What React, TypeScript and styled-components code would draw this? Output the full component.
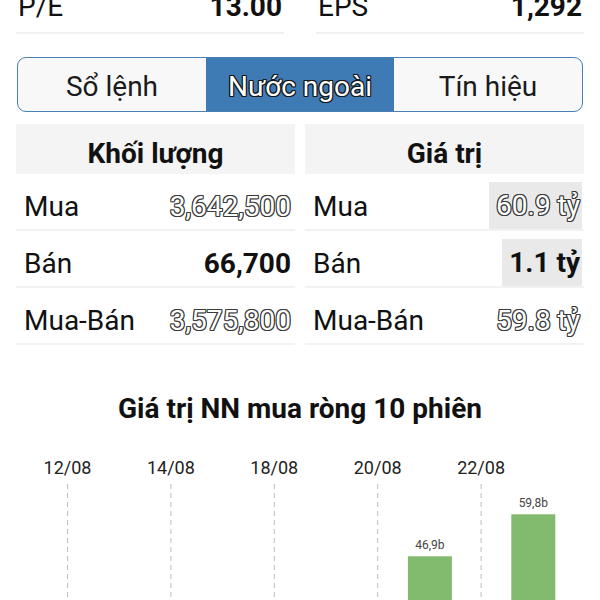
import React from "react";
import styled, { createGlobalStyle } from "styled-components";

const GlobalStyle = createGlobalStyle`
  html, body {
    margin: 0;
    padding: 0;
    background: #ffffff;
    font-family: Roboto, "Liberation Sans", Arial, sans-serif;
    color: #111;
    overflow: hidden;
  }
`;

const outline = (c: string) => `
  color: #ffffff;
  text-shadow: -1px 0 ${c}, 1px 0 ${c}, 0 -1px ${c}, 0 1px ${c},
    -1px -1px ${c}, 1px -1px ${c}, -1px 1px ${c}, 1px 1px ${c};
`;

const Page = styled.div`
  width: 600px;
  padding: 0 16px;
  box-sizing: border-box;
`;

const StatsRow = styled.div`
  display: grid;
  grid-template-columns: 1fr 1fr;
  column-gap: 32px;
  margin-top: -9px;
`;

const Stat = styled.div`
  display: flex;
  justify-content: space-between;
  align-items: baseline;
  font-size: 28px;
  line-height: 32px;
  padding: 0 2px 9px 2px;
  border-bottom: 2px solid #f1f1f1;
`;

const StatValue = styled.span`
  font-weight: 700;
`;

const Tabs = styled.div`
  display: grid;
  grid-template-columns: 1fr 1fr 1fr;
  margin: 23px 1px 12px;
  height: 55px;
  border: 1.5px solid #4a7fb4;
  border-radius: 9px;
  overflow: hidden;
  background: #f8f8f8;
  box-sizing: border-box;
`;

const Tab = styled.div<{ active?: boolean }>`
  display: flex;
  align-items: center;
  justify-content: center;
  padding-top: 4px;
  font-size: 28px;
  color: #1a1a1a;
  background: ${(p) => (p.active ? "#3e7bb5" : "transparent")};
  ${(p) => p.active && outline("#151515")}
`;

const Tables = styled.div`
  display: grid;
  grid-template-columns: 1fr 1fr;
  column-gap: 10px;
`;

const Column = styled.div`
  display: flex;
  flex-direction: column;
`;

const Header = styled.div`
  height: 50px;
  display: flex;
  align-items: center;
  justify-content: center;
  padding-top: 9px;
  box-sizing: border-box;
  background: #f4f4f4;
  font-size: 28px;
  font-weight: 700;
`;

const Row = styled.div`
  height: 57px;
  display: flex;
  align-items: center;
  justify-content: space-between;
  padding: 10px 4px 0 8px;
  border-bottom: 2px solid #f2f2f2;
  box-sizing: border-box;
  font-size: 28px;
`;

const Value = styled.span<{ bold?: boolean; hollow?: boolean; boxed?: boolean }>`
  font-weight: ${(p) => (p.bold ? 700 : 400)};
  ${(p) => p.hollow && outline("#3a3a3a")}
  ${(p) =>
    p.boxed &&
    `
    align-self: flex-end;
    height: 47px;
    display: flex;
    align-items: center;
    background: #e9e9e9;
    padding: 0 2px 0 7px;
    margin-right: -2px;
  `}
`;

const ChartTitle = styled.div`
  margin-top: 47px;
  text-align: center;
  font-size: 28px;
  line-height: 34px;
  font-weight: 700;
`;

const ChartSvg = styled.svg`
  display: block;
  width: 568px;
  height: 200px;
`;

const volumes = [
  { label: "Mua", value: "3,642,500", hollow: true },
  { label: "Bán", value: "66,700", bold: true },
  { label: "Mua-Bán", value: "3,575,800", hollow: true },
];

const values = [
  { label: "Mua", value: "60.9 tỷ", hollow: true, boxed: true },
  { label: "Bán", value: "1.1 tỷ", bold: true, boxed: true },
  { label: "Mua-Bán", value: "59.8 tỷ", hollow: true },
];

const dates = ["12/08", "14/08", "18/08", "20/08", "22/08"];
const slot = 51.7;
const firstX = 51.5;
const zeroY = 283;
const scale = 3.256;
const bars = [
  { index: 7, value: 46.9, text: "46,9b" },
  { index: 9, value: 59.8, text: "59,8b" },
];

const Chart = () => (
  <ChartSvg viewBox="0 0 568 200">
    {dates.map((d, i) => {
      const x = firstX + slot * 2 * i;
      return (
        <g key={d}>
          <text
            x={x}
            y={48}
            textAnchor="middle"
            fontSize="18"
            fill="#222"
            fontFamily="Roboto, sans-serif"
          >
            {d}
          </text>
          <line
            x1={x}
            x2={x}
            y1={58}
            y2={200}
            stroke="#bdbdbd"
            strokeWidth="1"
            strokeDasharray="5 4"
          />
        </g>
      );
    })}
    {bars.map((b) => {
      const cx = firstX + slot * b.index + 0.5;
      const top = zeroY - b.value * scale;
      return (
        <g key={b.text}>
          <rect x={cx - 22} y={top} width={44} height={200 - top} fill="#83bb6e" />
          <text
            x={cx}
            y={top - 7}
            textAnchor="middle"
            fontSize="12"
            fill="#444"
            fontFamily="Roboto, sans-serif"
          >
            {b.text}
          </text>
        </g>
      );
    })}
  </ChartSvg>
);

export default function App() {
  return (
    <>
      <GlobalStyle />
      <Page>
        <StatsRow>
          <Stat>
            <span>P/E</span>
            <StatValue>13.00</StatValue>
          </Stat>
          <Stat>
            <span>EPS</span>
            <StatValue>1,292</StatValue>
          </Stat>
        </StatsRow>

        <Tabs>
          <Tab>Sổ lệnh</Tab>
          <Tab active>Nước ngoài</Tab>
          <Tab>Tín hiệu</Tab>
        </Tabs>

        <Tables>
          <Column>
            <Header>Khối lượng</Header>
            {volumes.map((r) => (
              <Row key={r.label}>
                <span>{r.label}</span>
                <Value bold={r.bold} hollow={r.hollow}>
                  {r.value}
                </Value>
              </Row>
            ))}
          </Column>
          <Column>
            <Header>Giá trị</Header>
            {values.map((r) => (
              <Row key={r.label}>
                <span>{r.label}</span>
                <Value bold={r.bold} hollow={r.hollow} boxed={r.boxed}>
                  {r.value}
                </Value>
              </Row>
            ))}
          </Column>
        </Tables>

        <ChartTitle>Giá trị NN mua ròng 10 phiên</ChartTitle>
        <Chart />
      </Page>
    </>
  );
}
